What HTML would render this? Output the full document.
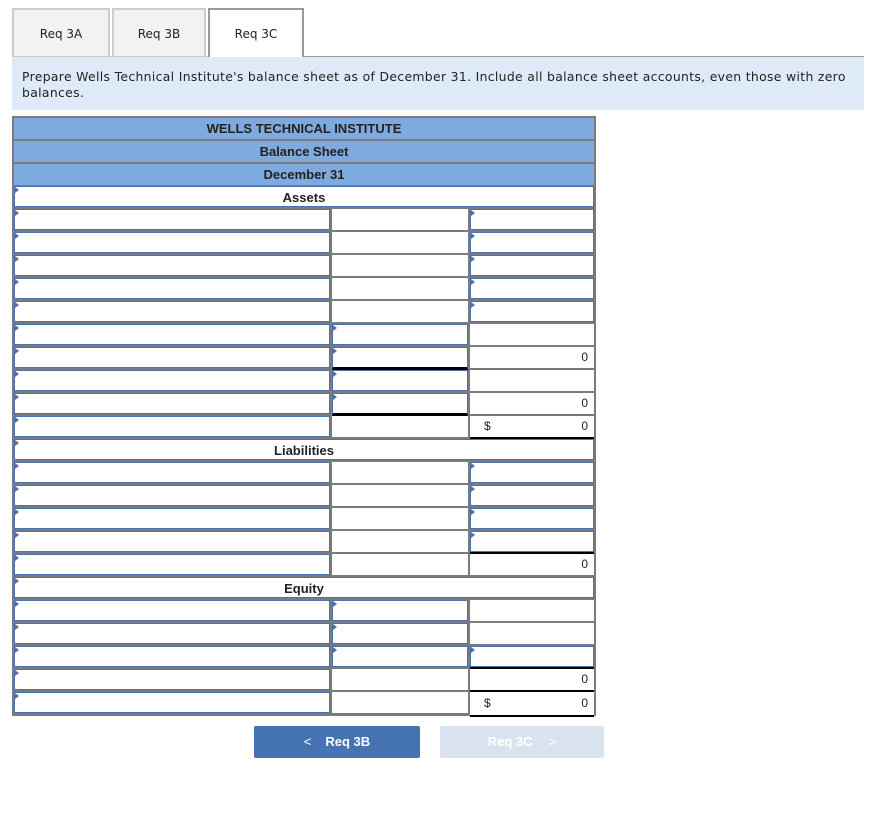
<!DOCTYPE html>
<html><head><meta charset="utf-8"><style>
body{margin:0;width:884px;height:836px;background:#fff;position:relative;font-family:"Liberation Sans",Arial,sans-serif;overflow:hidden}
.tab{position:absolute;top:8px;height:48px;box-sizing:border-box;font:12px "DejaVu Sans",Verdana,sans-serif;color:#222;text-align:center;line-height:48px}
.prompt{position:absolute;left:12px;top:57px;width:852px;height:53px;background:#deeaf7;box-sizing:border-box;padding:12px 10px;font:12.4px/16px "DejaVu Sans",Verdana,sans-serif;letter-spacing:0.33px;color:#222}
.grid{position:absolute;left:12px;top:116px;width:584px;height:600px;background:#7b7b7b}
.h{position:absolute;left:14px;width:580px;height:21px;background:#7faadf;text-align:center;font-weight:bold;font-size:13px;line-height:21px;color:#222}
.b{position:absolute;height:21px;background:#fff;box-sizing:border-box;font-size:12px;line-height:21px;color:#222}
.i{border:1px solid #4a72b0}
.i::before{content:"";position:absolute;left:0;top:0;border-left:4px solid #4a72b0;border-top:3px solid transparent;border-bottom:3px solid transparent}
.c1{left:14px;width:316px}.c2{left:332px;width:136px}.c3{left:470px;width:124px}
.f{left:14px;width:580px;text-align:center;font-weight:bold;font-size:13px}
.v{text-align:right;padding-right:6px}
.d::after{content:"$";position:absolute;left:14px}
.tt{border-top:2px solid #000}.tb{border-bottom:2px solid #000}
.btn{position:absolute;top:726px;height:32px;line-height:32px;text-align:center;font-weight:bold;font-size:13px;border-radius:2px}
</style></head><body>
<div class="tab" style="left:12px;width:98px;background:#f2f2f2;border:2px solid #ccc;border-bottom:none">Req 3A</div>
<div class="tab" style="left:112px;width:94px;background:#f2f2f2;border:2px solid #ccc;border-bottom:none">Req 3B</div>
<div class="tab" style="left:208px;width:96px;background:#fff;border:2px solid #999;border-bottom:none;height:50px">Req 3C</div>
<div style="position:absolute;left:304px;top:56px;width:560px;height:2px;background:#999"></div>
<div style="position:absolute;left:12px;top:56px;width:196px;height:1px;background:#ccc"></div>
<div class="prompt">Prepare Wells Technical Institute's balance sheet as of December 31. Include all balance sheet accounts, even those with zero balances.</div>
<div class="grid"></div>
<div class="h" style="top:118px">WELLS TECHNICAL INSTITUTE</div>
<div class="h" style="top:141px">Balance Sheet</div>
<div class="h" style="top:164px">December 31</div>
<div class="b i f" style="top:186px">Assets</div>

<div class="b i c1" style="top:209px"></div><div class="b c2" style="top:209px"></div><div class="b i c3" style="top:209px"></div>
<div class="b i c1" style="top:232px"></div><div class="b c2" style="top:232px"></div><div class="b i c3" style="top:232px"></div>
<div class="b i c1" style="top:255px"></div><div class="b c2" style="top:255px"></div><div class="b i c3" style="top:255px"></div>
<div class="b i c1" style="top:278px"></div><div class="b c2" style="top:278px"></div><div class="b i c3" style="top:278px"></div>
<div class="b i c1" style="top:301px"></div><div class="b c2" style="top:301px"></div><div class="b i c3" style="top:301px"></div>
<div class="b i c1" style="top:324px"></div><div class="b i c2" style="top:324px"></div><div class="b c3" style="top:324px"></div>
<div class="b i c1" style="top:347px"></div><div class="b i c2" style="top:347px;height:23px;border-bottom:3px solid #000"></div><div class="b c3 v" style="top:347px">0</div>
<div class="b i c1" style="top:370px"></div><div class="b i c2" style="top:370px"></div><div class="b c3" style="top:370px"></div>
<div class="b i c1" style="top:393px"></div><div class="b i c2" style="top:393px;height:23px;border-bottom:3px solid #000"></div><div class="b c3 v" style="top:393px">0</div>
<div class="b i c1" style="top:416px"></div><div class="b c2" style="top:416px"></div><div class="b c3 v d tb" style="top:416px;height:23px">0</div>
<div class="b i f" style="top:439px">Liabilities</div>
<div class="b i c1" style="top:462px"></div><div class="b c2" style="top:462px"></div><div class="b i c3" style="top:462px"></div>
<div class="b i c1" style="top:485px"></div><div class="b c2" style="top:485px"></div><div class="b i c3" style="top:485px"></div>
<div class="b i c1" style="top:508px"></div><div class="b c2" style="top:508px"></div><div class="b i c3" style="top:508px"></div>
<div class="b i c1" style="top:531px"></div><div class="b c2" style="top:531px"></div><div class="b i c3" style="top:531px"></div>
<div class="b i c1" style="top:554px"></div><div class="b c2" style="top:554px"></div><div class="b c3 v tt" style="top:552px;height:23px">0</div>
<div class="b i f" style="top:577px">Equity</div>
<div class="b i c1" style="top:600px"></div><div class="b i c2" style="top:600px"></div><div class="b c3" style="top:600px"></div>
<div class="b i c1" style="top:623px"></div><div class="b i c2" style="top:623px"></div><div class="b c3" style="top:623px"></div>
<div class="b i c1" style="top:646px"></div><div class="b i c2" style="top:646px"></div><div class="b i c3" style="top:646px"></div>
<div class="b i c1" style="top:669px"></div><div class="b c2" style="top:669px"></div><div class="b c3 v tt" style="top:667px;height:23px">0</div>
<div class="b i c1" style="top:692px"></div><div class="b c2" style="top:692px"></div><div class="b c3 v d tt tb" style="top:690px;height:27px;line-height:23px">0</div>

<div class="btn" style="left:254px;width:166px;background:#4673b1;color:#fff"><span style="font-weight:normal;margin-right:14px">&lt;</span>Req 3B</div>
<div class="btn" style="left:440px;width:164px;background:#d9e3ef;color:#fff">Req 3C<span style="font-weight:normal;margin-left:16px">&gt;</span></div>
</body></html>
